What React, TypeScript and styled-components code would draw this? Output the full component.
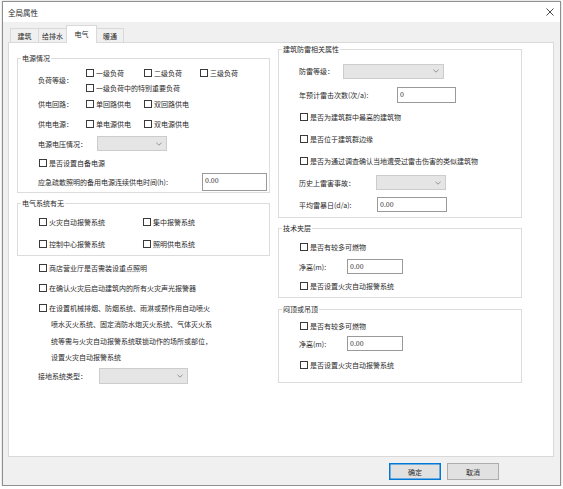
import React from "react";
import styled, { createGlobalStyle } from "styled-components";

const GlobalStyle = createGlobalStyle`
  html, body {
    margin: 0;
    padding: 0;
    background: #ffffff;
  }
  body {
    font-family: "Noto Sans CJK SC", "Noto Sans", sans-serif;
    font-size: 7px;
    color: #2a2a2a;
  }
  * {
    box-sizing: border-box;
  }
`;

const Window = styled.div`
  margin: 1px 0 0 2px;
  width: 559px;
  height: 485px;
  border: 1px solid #8f8f8f;
  box-shadow: 0 0 2px rgba(0, 0, 0, 0.25);
  background: #f0f0f0;
  display: flex;
  flex-direction: column;
`;

const TitleBar = styled.div`
  height: 20px;
  background: #ffffff;
  display: flex;
  align-items: center;
  justify-content: space-between;
  padding: 0 6px 0 5px;
  font-size: 7.5px;
`;

const Body = styled.div`
  padding: 3px 6px 0 5px;
  display: flex;
  flex-direction: column;
`;

const TabStrip = styled.div`
  height: 17px;
  display: flex;
  align-items: flex-end;
  padding-left: 2px;
  position: relative;
  z-index: 1;
`;

const Tab = styled.div<{ $w: number; $active?: boolean }>`
  width: ${(p) => p.$w}px;
  height: ${(p) => (p.$active ? 18 : 14)}px;
  margin-left: -1px;
  margin-bottom: ${(p) => (p.$active ? -1 : 0)}px;
  padding-bottom: ${(p) => (p.$active ? 2 : 0)}px;
  border: 1px solid #d9d9d9;
  border-bottom: none;
  background: ${(p) => (p.$active ? "#ffffff" : "#f0f0f0")};
  display: flex;
  align-items: center;
  justify-content: center;
  &:first-child {
    margin-left: 0;
  }
`;

const Panel = styled.div`
  height: 415px;
  background: #ffffff;
  border: 1px solid #d9d9d9;
  display: grid;
  grid-template-columns: 253px 244px;
  column-gap: 8px;
  padding-left: 8px;
  align-items: start;
`;

const Column = styled.div<{ $top: number }>`
  padding-top: ${(p) => p.$top}px;
  display: flex;
  flex-direction: column;
`;

const Group = styled.div<{ $pt: number; $pb: number; $pl: number; $mt?: number }>`
  position: relative;
  border: 1px solid #dcdcdc;
  margin-top: ${(p) => p.$mt ?? 0}px;
  padding: ${(p) => p.$pt}px 0 ${(p) => p.$pb}px ${(p) => p.$pl}px;
`;

const Legend = styled.span`
  position: absolute;
  top: -6px;
  left: 3px;
  line-height: 11px;
  padding: 0 1px;
  background: #ffffff;
`;

const Plain = styled.div`
  padding-left: 21px;
`;

const Row = styled.div<{ $h: number; $mt?: number }>`
  height: ${(p) => p.$h}px;
  margin-top: ${(p) => p.$mt ?? 0}px;
  display: flex;
  align-items: center;
  white-space: nowrap;
`;

const Label = styled.span<{ $w: number }>`
  width: ${(p) => p.$w}px;
  flex: none;
`;

const CheckGrid = styled.div<{ $cols: string; $row: number }>`
  display: grid;
  grid-template-columns: ${(p) => p.$cols};
  grid-auto-rows: ${(p) => p.$row}px;
  align-items: center;
`;

const CheckWrap = styled.label`
  display: flex;
  align-items: center;
  white-space: nowrap;
`;

const Box = styled.span`
  width: 8px;
  height: 8px;
  margin: 0 2px 0 1px;
  border: 1px solid #3a3a3a;
  background: #ffffff;
  flex: none;
`;

const Check = ({ children }: { children: React.ReactNode }) => (
  <CheckWrap>
    <Box />
    {children}
  </CheckWrap>
);

const LongCheck = styled.div`
  margin-top: 4px;
  display: flex;
  align-items: flex-start;
  line-height: 16.3px;
  ${Box} {
    margin-top: 4px;
  }
`;

const LongText = styled.div`
  padding-left: 2px;
  text-indent: -2px;
  white-space: nowrap;
`;

const Combo = styled.div<{ $w: number; $h: number }>`
  width: ${(p) => p.$w}px;
  height: ${(p) => p.$h}px;
  background: #e5e5e5;
  border: 1px solid #cccccc;
  display: flex;
  align-items: center;
  justify-content: flex-end;
  padding-right: 4px;
  flex: none;
`;

const Field = styled.div<{ $w: number; $h: number }>`
  width: ${(p) => p.$w}px;
  height: ${(p) => p.$h}px;
  background: #ffffff;
  border: 1px solid #9a9a9a;
  padding: 1px 0 0 2px;
  line-height: 11px;
  flex: none;
`;

const Chevron = () => (
  <svg width="6" height="4" viewBox="0 0 6 4">
    <path d="M0.5 0.8 L3 3.2 L5.5 0.8" fill="none" stroke="#8a8a8a" strokeWidth="0.9" />
  </svg>
);

const Footer = styled.div`
  height: 28px;
  display: flex;
  justify-content: flex-end;
  align-items: flex-start;
  gap: 6px;
  padding: 6px 61px 0 0;
`;

const Button = styled.div<{ $primary?: boolean }>`
  width: 52px;
  height: 17px;
  background: #e1e1e1;
  border: 1px solid ${(p) => (p.$primary ? "#0078d7" : "#adadad")};
  box-shadow: ${(p) => (p.$primary ? "inset 0 0 0 0.5px #0078d7" : "none")};
  display: flex;
  align-items: center;
  justify-content: center;
`;

export default function App() {
  return (
    <>
      <GlobalStyle />
      <Window>
        <TitleBar>
          <span>全局属性</span>
          <svg width="8" height="8" viewBox="0 0 8 8">
            <path d="M0.5 0.5 L7.5 7.5 M7.5 0.5 L0.5 7.5" stroke="#333" strokeWidth="0.9" />
          </svg>
        </TitleBar>
        <Body>
          <TabStrip>
            <Tab $w={29}>建筑</Tab>
            <Tab $w={29}>给排水</Tab>
            <Tab $w={31} $active>
              电气
            </Tab>
            <Tab $w={28}>暖通</Tab>
          </TabStrip>
          <Panel>
            <Column $top={15}>
              <Group $pt={6} $pb={3} $pl={20}>
                <Legend>电源情况</Legend>
                <Row $h={30}>
                  <Label $w={47}>负荷等级：</Label>
                  <CheckGrid $cols="58px 56px 56px" $row={15}>
                    <Check>一级负荷</Check>
                    <Check>二级负荷</Check>
                    <Check>三级负荷</Check>
                    <Check>一级负荷中的特别重要负荷</Check>
                  </CheckGrid>
                </Row>
                <Row $h={18}>
                  <Label $w={47}>供电回路：</Label>
                  <CheckGrid $cols="58px 56px" $row={18}>
                    <Check>单回路供电</Check>
                    <Check>双回路供电</Check>
                  </CheckGrid>
                </Row>
                <Row $h={22}>
                  <Label $w={47}>供电电源：</Label>
                  <CheckGrid $cols="58px 56px" $row={22}>
                    <Check>单电源供电</Check>
                    <Check>双电源供电</Check>
                  </CheckGrid>
                </Row>
                <Row $h={17}>
                  <Label $w={59}>电源电压情况：</Label>
                  <Combo $w={70} $h={15}>
                    <Chevron />
                  </Combo>
                </Row>
                <Row $h={22}>
                  <Check>是否设置自备电源</Check>
                </Row>
                <Row $h={15}>
                  <Label $w={164}>应急疏散照明的备用电源连续供电时间(h):</Label>
                  <Field $w={65} $h={18}>0.00</Field>
                </Row>
              </Group>

              <Group $pt={6} $pb={0} $pl={20} $mt={10}>
                <Legend>电气系统有无</Legend>
                <CheckGrid $cols="104px 104px" $row={23}>
                  <Check>火灾自动报警系统</Check>
                  <Check>集中报警系统</Check>
                </CheckGrid>
                <CheckGrid $cols="104px 104px" $row={22}>
                  <Check>控制中心报警系统</Check>
                  <Check>照明供电系统</Check>
                </CheckGrid>
              </Group>

              <Plain>
                <Row $h={24}>
                  <Check>商店营业厅是否需装设重点照明</Check>
                </Row>
                <Row $h={16}>
                  <Check>在确认火灾后启动建筑内的所有火灾声光报警器</Check>
                </Row>
                <LongCheck>
                  <Box />
                  <LongText>
                    在设置机械排烟、防烟系统、雨淋或预作用自动喷火
                    <br />
                    喷水灭火系统、固定消防水炮灭火系统、气体灭火系
                    <br />
                    统等需与火灾自动报警系统联锁动作的场所或部位，
                    <br />
                    设置火灾自动报警系统
                  </LongText>
                </LongCheck>
                <Row $h={16} $mt={3}>
                  <Label $w={61}>接地系统类型：</Label>
                  <Combo $w={89} $h={16}>
                    <Chevron />
                  </Combo>
                </Row>
              </Plain>
            </Column>

            <Column $top={6}>
              <Group $pt={9} $pb={1} $pl={20}>
                <Legend>建筑防雷相关属性</Legend>
                <Row $h={24}>
                  <Label $w={44}>防雷等级：</Label>
                  <Combo $w={101} $h={15}>
                    <Chevron />
                  </Combo>
                </Row>
                <Row $h={23}>
                  <Label $w={98}>年预计雷击次数(次/a):</Label>
                  <Field $w={59} $h={16}>0</Field>
                </Row>
                <Row $h={22}>
                  <Check>是否为建筑群中最高的建筑物</Check>
                </Row>
                <Row $h={22}>
                  <Check>是否位于建筑群边缘</Check>
                </Row>
                <Row $h={22}>
                  <Check>是否为通过调查确认当地遭受过雷击伤害的类似建筑物</Check>
                </Row>
                <Row $h={21}>
                  <Label $w={77}>历史上雷害事故：</Label>
                  <Combo $w={70} $h={15}>
                    <Chevron />
                  </Combo>
                </Row>
                <Row $h={23}>
                  <Label $w={78}>平均雷暴日(d/a):</Label>
                  <Field $w={70} $h={15}>0.00</Field>
                </Row>
              </Group>

              <Group $pt={8} $pb={1} $pl={20} $mt={10}>
                <Legend>技术夹层</Legend>
                <Row $h={20}>
                  <Check>是否有较多可燃物</Check>
                </Row>
                <Row $h={19}>
                  <Label $w={48}>净高(m):</Label>
                  <Field $w={56} $h={15}>0.00</Field>
                </Row>
                <Row $h={20}>
                  <Check>是否设置火灾自动报警系统</Check>
                </Row>
              </Group>

              <Group $pt={6} $pb={4} $pl={20} $mt={11}>
                <Legend>闷顶或吊顶</Legend>
                <Row $h={20}>
                  <Check>是否有较多可燃物</Check>
                </Row>
                <Row $h={15}>
                  <Label $w={48}>净高(m):</Label>
                  <Field $w={56} $h={15}>0.00</Field>
                </Row>
                <Row $h={27}>
                  <Check>是否设置火灾自动报警系统</Check>
                </Row>
              </Group>
            </Column>
          </Panel>
        </Body>
        <Footer>
          <Button $primary>确定</Button>
          <Button>取消</Button>
        </Footer>
      </Window>
    </>
  );
}
